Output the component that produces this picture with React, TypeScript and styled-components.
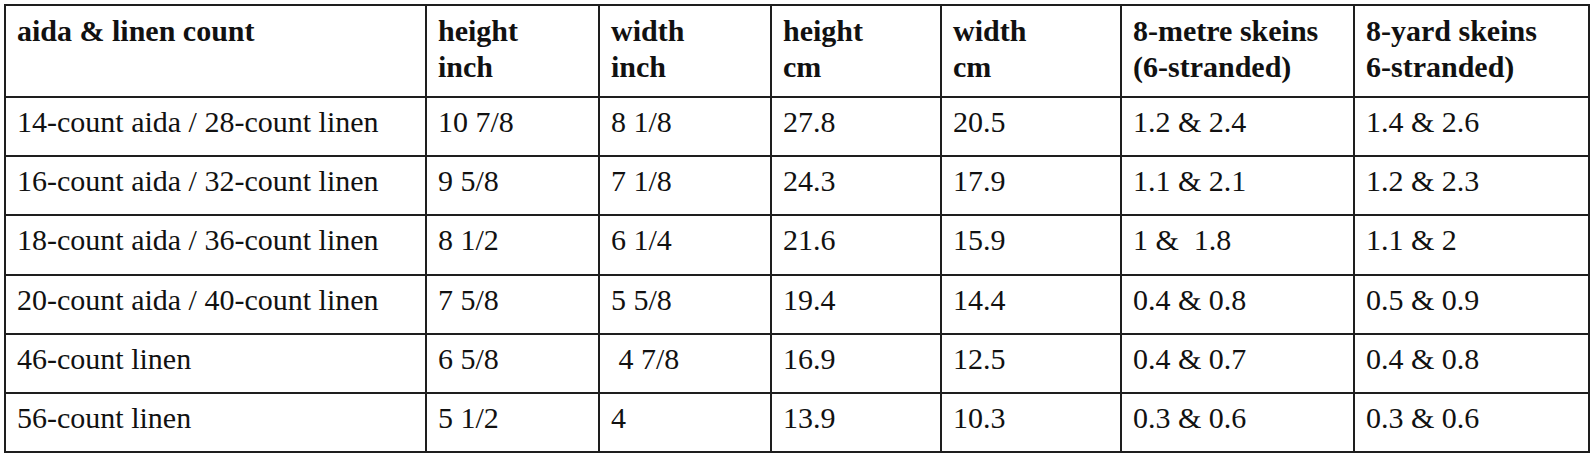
import React from 'react';
import styled, { createGlobalStyle } from 'styled-components';

const GlobalStyle = createGlobalStyle`
  html, body {
    margin: 0;
    padding: 0;
    background: #ffffff;
  }
  body {
    font-family: "Liberation Serif", "Times New Roman", serif;
    color: #111111;
  }
`;

const Page = styled.div`
  padding: 4px 0 0 4px;
`;

const Table = styled.table`
  border-collapse: collapse;
  table-layout: fixed;
  width: 1584px;
  border: 2px solid #1e1e1e;
  font-size: 30px;
  line-height: normal;
`;

const HeadCell = styled.th`
  border: 2px solid #1e1e1e;
  padding: 7px 11px 0;
  height: 92px;
  box-sizing: border-box;
  text-align: left;
  vertical-align: top;
  font-weight: bold;
  line-height: 35.5px;
`;

const Cell = styled.td`
  border: 2px solid #1e1e1e;
  padding: 7px 11px 0;
  height: 59.2px;
  box-sizing: border-box;
  vertical-align: top;
  font-weight: normal;
  white-space: pre;
`;

const columns = [421, 173, 172, 170, 180, 233, 235];

const headers: React.ReactNode[] = [
  'aida & linen count',
  <>height<br />inch</>,
  <>width<br />inch</>,
  <>height<br />cm</>,
  <>width<br />cm</>,
  <>8-metre skeins<br />(6-stranded)</>,
  <>8-yard skeins<br />6-stranded)</>,
];

const rows: string[][] = [
  ['14-count aida / 28-count linen', '10 7/8', '8 1/8', '27.8', '20.5', '1.2 & 2.4', '1.4 & 2.6'],
  ['16-count aida / 32-count linen', '9 5/8', '7 1/8', '24.3', '17.9', '1.1 & 2.1', '1.2 & 2.3'],
  ['18-count aida / 36-count linen', '8 1/2', '6 1/4', '21.6', '15.9', '1 &  1.8', '1.1 & 2'],
  ['20-count aida / 40-count linen', '7 5/8', '5 5/8', '19.4', '14.4', '0.4 & 0.8', '0.5 & 0.9'],
  ['46-count linen', '6 5/8', ' 4 7/8', '16.9', '12.5', '0.4 & 0.7', '0.4 & 0.8'],
  ['56-count linen', '5 1/2', '4', '13.9', '10.3', '0.3 & 0.6', '0.3 & 0.6'],
];

const App: React.FC = () => {
  return (
    <Page>
      <GlobalStyle />
      <Table>
        <colgroup>
          {columns.map((w, i) => (
            <col key={i} style={{ width: `${w}px` }} />
          ))}
        </colgroup>
        <thead>
          <tr>
            {headers.map((h, i) => (
              <HeadCell key={i}>{h}</HeadCell>
            ))}
          </tr>
        </thead>
        <tbody>
          {rows.map((row, r) => (
            <tr key={r}>
              {row.map((value, c) => (
                <Cell key={c}>{value}</Cell>
              ))}
            </tr>
          ))}
        </tbody>
      </Table>
    </Page>
  );
};

export default App;
